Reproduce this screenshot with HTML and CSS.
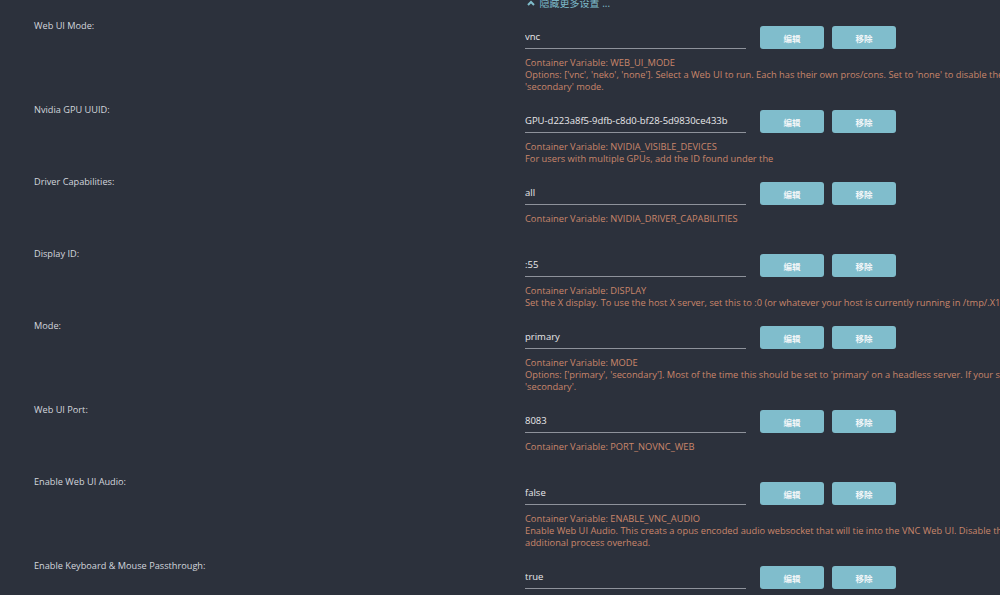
FILE: index.html
```html
<!DOCTYPE html>
<html lang="en">
<head>
    <meta charset="UTF-8">
    <meta name="viewport" content="width=device-width, initial-scale=1.0">
    <title>Container Settings</title>
    <link rel="stylesheet" href="styles.css">
</head>
<body>

    <!-- Toggle for the advanced settings -->
    <div class="toggle">
        <span class="toggle-link">
            <svg class="chevron" width="8" height="6" viewBox="0 0 8 6"><path d="M1 5 L4 2 L7 5" fill="none" stroke="currentColor" stroke-width="2"/></svg>
            隐藏更多设置 ...
        </span>
    </div>

    <div class="settings">

        <div class="row">
            <div class="label">Web UI Mode:</div>
            <div class="field">
                <div class="input-line">
                    <input class="value" type="text" value="vnc">
                    <button class="btn">编辑</button>
                    <button class="btn">移除</button>
                </div>
                <div class="desc">
                    <div>Container Variable: WEB_UI_MODE</div>
                    <div>Options: ['vnc', 'neko', 'none']. Select a Web UI to run. Each has their own pros/cons. Set to 'none' to disable the Web UI when running in</div>
                    <div>'secondary' mode.</div>
                </div>
            </div>
        </div>

        <div class="row">
            <div class="label">Nvidia GPU UUID:</div>
            <div class="field">
                <div class="input-line">
                    <input class="value" type="text" value="GPU-d223a8f5-9dfb-c8d0-bf28-5d9830ce433b">
                    <button class="btn">编辑</button>
                    <button class="btn">移除</button>
                </div>
                <div class="desc">
                    <div>Container Variable: NVIDIA_VISIBLE_DEVICES</div>
                    <div>For users with multiple GPUs, add the ID found under the</div>
                </div>
            </div>
        </div>

        <div class="row">
            <div class="label">Driver Capabilities:</div>
            <div class="field">
                <div class="input-line">
                    <input class="value" type="text" value="all">
                    <button class="btn">编辑</button>
                    <button class="btn">移除</button>
                </div>
                <div class="desc">
                    <div>Container Variable: NVIDIA_DRIVER_CAPABILITIES</div>
                </div>
            </div>
        </div>

        <div class="row">
            <div class="label">Display ID:</div>
            <div class="field">
                <div class="input-line">
                    <input class="value" type="text" value=":55">
                    <button class="btn">编辑</button>
                    <button class="btn">移除</button>
                </div>
                <div class="desc">
                    <div>Container Variable: DISPLAY</div>
                    <div>Set the X display. To use the host X server, set this to :0 (or whatever your host is currently running in /tmp/.X11-unix).</div>
                </div>
            </div>
        </div>

        <div class="row">
            <div class="label">Mode:</div>
            <div class="field">
                <div class="input-line">
                    <input class="value" type="text" value="primary">
                    <button class="btn">编辑</button>
                    <button class="btn">移除</button>
                </div>
                <div class="desc">
                    <div>Container Variable: MODE</div>
                    <div>Options: ['primary', 'secondary']. Most of the time this should be set to 'primary' on a headless server. If your server has a display, set this to</div>
                    <div>'secondary'.</div>
                </div>
            </div>
        </div>

        <div class="row">
            <div class="label">Web UI Port:</div>
            <div class="field">
                <div class="input-line">
                    <input class="value" type="text" value="8083">
                    <button class="btn">编辑</button>
                    <button class="btn">移除</button>
                </div>
                <div class="desc">
                    <div>Container Variable: PORT_NOVNC_WEB</div>
                </div>
            </div>
        </div>

        <div class="row">
            <div class="label">Enable Web UI Audio:</div>
            <div class="field">
                <div class="input-line">
                    <input class="value" type="text" value="false">
                    <button class="btn">编辑</button>
                    <button class="btn">移除</button>
                </div>
                <div class="desc">
                    <div>Container Variable: ENABLE_VNC_AUDIO</div>
                    <div>Enable Web UI Audio. This creats a opus encoded audio websocket that will tie into the VNC Web UI. Disable this to save on some</div>
                    <div>additional process overhead.</div>
                </div>
            </div>
        </div>

        <div class="row">
            <div class="label">Enable Keyboard &amp; Mouse Passthrough:</div>
            <div class="field">
                <div class="input-line">
                    <input class="value" type="text" value="true">
                    <button class="btn">编辑</button>
                    <button class="btn">移除</button>
                </div>
                <div class="desc">
                    <div>Container Variable: ENABLE_EVDEV_INPUTS</div>
                </div>
            </div>
        </div>

    </div>

</body>
</html>
```

FILE: styles.css
```css
html, body {
    margin: 0;
    overflow: hidden;
}
body {
    background-color: #2c313c;
    font-family: "Open Sans", "Noto Sans CJK SC", sans-serif;
    font-size: 9.2px;
    color: #d3d6dc;
}
.toggle {
    margin-top: -3px;
    height: 12px;
    line-height: 12px;
    padding-left: 527px;
    margin-bottom: 10px;
}
.toggle-link {
    color: #7fbccb;
    font-size: 10px;
    white-space: nowrap;
}
.chevron {
    margin-right: 2px;
    vertical-align: 1px;
}
.settings {
    padding-left: 34px;
}
.row {
    display: flex;
    min-height: 72px;
    box-sizing: border-box;
    padding-bottom: 10px;
}
.label {
    width: 491px;
    flex: none;
    padding-top: 1px;
    line-height: 12px;
}
.field {
    flex: none;
    width: 1000px;
}
.input-line {
    display: flex;
    align-items: center;
    margin-top: 7px;
    height: 23px;
}
.value {
    width: 221px;
    height: 23px;
    box-sizing: border-box;
    margin: 0 14px 0 0;
    padding: 0 0 1px 0;
    background: transparent;
    border: none;
    border-bottom: 1px solid #8e929b;
    color: #e8e8ea;
    font-family: inherit;
    font-size: 9.5px;
    outline: none;
}
.btn {
    width: 64px;
    height: 23px;
    margin-right: 8px;
    padding: 0;
    border: none;
    border-radius: 3px;
    background-color: #80bdcc;
    color: #f2f6f8;
    font-family: "Noto Sans CJK SC", sans-serif;
    font-size: 8.5px;
    font-weight: bold;
}
.desc {
    margin-top: 8px;
    line-height: 12px;
    font-size: 9.3px;
    color: #c9866b;
    white-space: nowrap;
}
```
